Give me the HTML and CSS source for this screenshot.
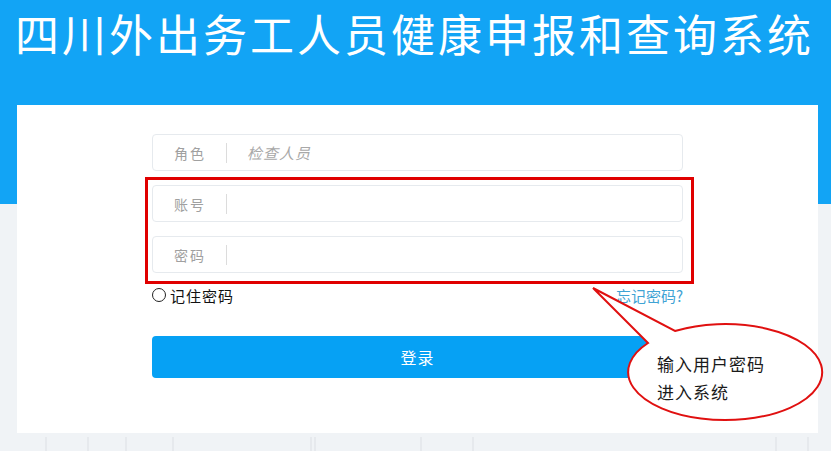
FILE: index.html
```html
<!DOCTYPE html>
<html lang="zh-CN">
<head>
    <meta charset="UTF-8">
    <meta name="viewport" content="width=device-width, initial-scale=1.0">
    <title>四川外出务工人员健康申报和查询系统</title>
    <link rel="stylesheet" href="styles.css">
</head>
<body>
    <div class="page">
        <div class="header">
            <h1>四川外出务工人员健康申报和查询系统</h1>
        </div>

        <div class="card">
            <form class="login-form" id="login-form">
                <div class="field">
                    <span class="field-label">角色</span>
                    <span class="field-line"></span>
                    <input type="text" class="field-input" placeholder="检查人员" readonly>
                </div>
                <div class="field">
                    <span class="field-label">账号</span>
                    <span class="field-line"></span>
                    <input type="text" class="field-input">
                </div>
                <div class="field">
                    <span class="field-label">密码</span>
                    <span class="field-line"></span>
                    <input type="password" class="field-input">
                </div>

                <div class="form-row">
                    <label class="remember"><span class="circle"></span>记住密码</label>
                    <a href="#" class="forgot">忘记密码?</a>
                </div>

                <button type="submit" class="login-btn">登录</button>
            </form>

            <div class="mark-box"></div>
        </div>

        <div class="skyline">
            <span style="left: 45px; width: 40px;"></span>
            <span style="left: 125px; width: 45px;"></span>
            <span style="left: 310px; width: 2px;"></span>
            <span style="left: 420px; width: 50px;"></span>
            <span style="left: 775px; width: 30px;"></span>
        </div>
    </div>

    <svg class="callout" width="831" height="451" viewBox="0 0 831 451">
        <path d="M 648 343 L 593 288 L 675 331 A 97 48 0 1 1 648 343 Z" fill="#fff" stroke="#e01010" stroke-width="2"/>
        <text x="657" y="371">输入用户密码</text>
        <text x="657" y="399">进入系统</text>
    </svg>
</body>
</html>
```

FILE: styles.css
```css
body {
    margin: 0;
    font-family: "Noto Sans CJK SC", "Noto Sans", sans-serif;
    background-color: #f0f3f6;
}

.page {
    position: relative;
    background: linear-gradient(#12a4f5 0, #12a4f5 204px, #f0f3f6 204px);
    height: 451px;
    overflow: hidden;
}

.header {
    height: 105px;
}

h1 {
    margin: 0;
    padding: 11px 0 0 15px;
    font-size: 44px;
    line-height: 44px;
    font-weight: normal;
    letter-spacing: 3px;
    color: #fff;
    white-space: nowrap;
}

.card {
    position: relative;
    background-color: #fff;
    margin: 0 13px 0 17px;
    height: 328px;
    padding-top: 29px;
    box-sizing: border-box;
}

.login-form {
    width: 531px;
    margin: 0 auto;
}

.field {
    display: flex;
    align-items: center;
    height: 37px;
    border: 1px solid #e6eaee;
    border-radius: 4px;
    margin-bottom: 14px;
    box-sizing: border-box;
}

.field-label {
    width: 52px;
    padding-left: 21px;
    font-size: 14px;
    letter-spacing: 2px;
    color: #a0a0a0;
}

.field-line {
    width: 1px;
    height: 20px;
    background-color: #dcdcdc;
}

.field-input {
    flex: 1;
    border: none;
    outline: none;
    background: transparent;
    margin-left: 18px;
    font-family: inherit;
    font-size: 15px;
    letter-spacing: 1px;
}

.field-input::placeholder {
    color: #a8a8a8;
    font-style: italic;
}

.form-row {
    display: flex;
    justify-content: space-between;
    align-items: center;
    margin-top: -2px;
    height: 20px;
}

.remember {
    display: flex;
    align-items: center;
    font-size: 15px;
    letter-spacing: 1px;
    color: #111;
}

.circle {
    width: 12px;
    height: 12px;
    border: 1px solid #222;
    border-radius: 50%;
    margin-right: 4px;
}

.forgot {
    font-size: 15px;
    color: #3fa3d4;
    text-decoration: none;
}

.login-btn {
    display: block;
    width: 100%;
    height: 42px;
    margin-top: 31px;
    background-color: #06a1f4;
    color: #fff;
    border: none;
    border-radius: 4px;
    font-family: inherit;
    font-size: 16px;
    letter-spacing: 1px;
    cursor: pointer;
}

/* faint building outlines under the card */
.skyline {
    position: relative;
    height: 18px;
}

.skyline span {
    position: absolute;
    bottom: 0;
    height: 14px;
    border-left: 2px solid #e6e9ed;
    border-right: 2px solid #e6e9ed;
}

/* annotation drawn over the form */
.mark-box {
    position: absolute;
    left: 128px;
    top: 72px;
    width: 549px;
    height: 107px;
    border: 3px solid #e00000;
    box-sizing: border-box;
}

.callout {
    position: absolute;
    left: 0;
    top: 0;
}

.callout text {
    font-family: "Noto Sans CJK SC", sans-serif;
    font-size: 17px;
    letter-spacing: 1px;
    fill: #1a1a1a;
}
```
